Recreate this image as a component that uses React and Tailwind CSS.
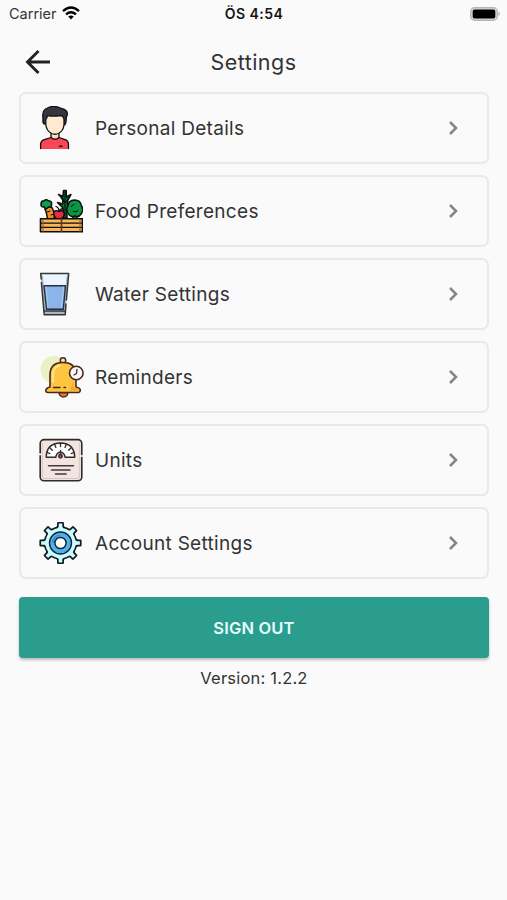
const PersonIcon = () => (
    <svg viewBox="0 0 44 44" className="size-11" strokeLinejoin="round" strokeLinecap="round">
        <path d="M12 25h8v8l-4 2-4-2z" fill="#f9dcb8" stroke="#111" strokeWidth="1.3" />
        <path d="M1.6 43V38Q1.8 34.5 6 33.3L12 31.5Q16 35 20 31.5L25.5 33.3Q29.4 34.5 29.5 38V43z" fill="#fb4659" />
        <path d="M1.6 42.5V38Q1.8 34.5 6 33.3L12 31.5Q16 35 20 31.5L25.5 33.3Q29.4 34.5 29.5 38V42.5" fill="none" stroke="#1b0c10" strokeWidth="1.3" />
        <path d="M20.5 40.2h2.5" stroke="#3a0a12" strokeWidth="1.6" />
        <path d="M5.5 18Q3.5 18 4 12Q2.5 3.5 9.500 1.500Q16-1 22.500 2.500Q29 4 28.300 9Q27.200 11 27.200 13Q27.200 18 25.500 19z" fill="#34353f" stroke="#111218" strokeWidth="1.3" />
        <path d="M6.800 13.500Q8.200 12 8.500 9.700Q15 10.800 22 9.500Q24.500 10 25 13.500V18.500Q24.500 25 19.500 27.500Q16 29 12.500 27.500Q7.500 25 6.800 18.500z" fill="#feead0" stroke="#17171b" strokeWidth="1.3" />
    </svg>
);

const FoodIcon = () => (
    <svg viewBox="0 0 44 44" className="size-11" stroke="#0b0d0b" strokeLinejoin="round" strokeLinecap="round">
        <path d="M24 29V19L18.500 13.500L23.500 15L24 10L19.500 5.500L24 7.500L24.500 1.500H27.200L27.500 8L32 5.500L28.800 11.500L28.500 15.500L32 13L28 20V29z" fill="#096e3e" strokeWidth="1.5" />
        <path d="M26 3v24M22 9l4 5l3.500-5" fill="none" strokeWidth="1.1" />
        <path d="M33.500 22h5l-.5 8h-4z" fill="#0b813d" strokeWidth="1.4" />
        <path d="M29.200 24.500Q26.500 20 29.200 16.500Q29.500 11.300 35.500 11Q41.500 11 42.300 16.500Q45 20 42.500 24.500Q39.500 29 36 26.800Q31.500 29 29.200 24.500z" fill="#099541" strokeWidth="1.4" />
        <path d="M32.500 17.500q.5-2 2.500-2M34.500 22.500q3 1.500 4.500-1" fill="none" strokeWidth="1" />
        <path d="M6 20Q9 16.500 13 18.500Q16 24 15 30H8.500Q8 25 6 20z" fill="#f58b28" strokeWidth="1.4" />
        <path d="M8 23l3-.8M12 26l2.500-.8" fill="none" strokeWidth="1" />
        <path d="M6.500 20.500L5.500 18Q1.500 18.500 2 15Q2 12 5 11.800Q7 9.800 9.500 11.800Q13.500 12 12.500 16Q12.500 18.500 9.500 18z" fill="#09a14b" strokeWidth="1.5" />
        <path d="M20 22.300Q14.500 20 14.800 25Q15.500 30 20 30Q25 29.500 25.200 25Q25 20.500 20 22.300z" fill="#e52b45" strokeWidth="1.4" />
        <path d="M20 22.500q0-4-3-5M20 22q2-3 4-2" fill="none" strokeWidth="1.3" />
        <path d="M1.500 29.800h42v13H1.500z" fill="#f6b557" strokeWidth="1.6" />
        <path d="M2 34.100h41M2 38.400h41" fill="none" strokeWidth="1.3" />
        <path d="M22.500 30v12.500" stroke="#5d3a18" strokeWidth="1.6" />
        <path d="M4 30.500v12M41 30.500v12" stroke="#8d572c" strokeWidth="1" />
    </svg>
);

const WaterIcon = () => (
    <svg viewBox="0 0 44 44" className="size-11" strokeLinejoin="round" strokeLinecap="round">
        <path d="M1.8 1.2H29.5L26.2 42.8H5.2z" fill="#eaf5ff" />
        <path d="M4 5L7 38.5H24.5L27.5 5L29.5 1.2L26.2 42.8H5.2L1.8 1.2z" fill="#adb5bf" />
        <path d="M5 13.8H26.5L24.3 37.2H7.5z" fill="#8bb5e8" stroke="#252d38" strokeWidth="1.4" />
        <path d="M7 15l2 20.5M24.5 15l-2 20.5" stroke="#a9cbf2" strokeWidth="1" />
        <path d="M2.2 7L1.7 1.4H29.7L27.4 28M27 32L26.2 42.8H5.2L2.4 10.5M5 39H26.3" fill="none" stroke="#33373d" strokeWidth="1.5" />
    </svg>
);

const ReminderIcon = () => (
    <svg viewBox="0 0 45 44" className="h-11 w-[45px]" stroke="#49291f" strokeLinejoin="round" strokeLinecap="round">
        <circle cx="15" cy="14.5" r="13.5" fill="#eaf1c7" stroke="none" />
        <path d="M20 37.5Q20.5 42 24.5 42Q28.5 42 29 37.5z" fill="#ed751f" strokeWidth="1.4" />
        <circle cx="24" cy="5.5" r="2.7" fill="#fae7bc" strokeWidth="1.5" />
        <path d="M11 32V20Q11 7.5 24 7.5Q37 7.5 37 20V32Q41.5 33 41.3 35.5Q41 37.5 39 37.5H9Q6.8 37.5 6.8 35.5Q7 33 11 32z" fill="#fec543" strokeWidth="1.6" />
        <path d="M14 27V20Q14 12.5 20.5 10.5" fill="none" stroke="#ffe18b" strokeWidth="2.3" />
        <path d="M34.5 26v6.5H37l3 3H31z" fill="#f6a630" stroke="none" />
        <path d="M14.5 32.5H21M25 32.5h1.5" strokeWidth="1.5" />
        <circle cx="37.3" cy="18" r="6.8" fill="#fbf7fa" strokeWidth="1.6" />
        <path d="M38 14.5L37.5 18.5L35 20" fill="none" strokeWidth="1.3" />
    </svg>
);

const UnitsIcon = () => (
    <svg viewBox="0 0 44 44" className="size-11" stroke="#302a2a" strokeLinejoin="round" strokeLinecap="round">
        <rect x="1.2" y="1.6" width="41.6" height="41.2" rx="3.8" fill="#f2e5e1" strokeWidth="1.6" />
        <path d="M3.3 5v33.5Q3.5 40.5 6 40.5H38Q40.5 40.5 40.7 38V5" fill="none" stroke="#d5c4bf" strokeWidth="1" />
        <path d="M0 16.3h2.5M41.5 18h2" stroke="#fafafa" strokeWidth="1.7" />
        <path d="M7.2 19.3Q7.5 5.3 21.5 5.1Q35.2 5.3 35.7 19.3H26.2Q25.2 14.3 21.5 14.3Q17.700 14.300 16.700 19.300z" fill="#fff" strokeWidth="1.5" />
        <path d="M8.2 14.5l2.800 1.100M11 10l2.300 2.200M15.700 6.500l1.200 2.900M21.500 5.500v3M27.200 6.500l-1.200 2.900M31.900 10L29.700 12.200M34.900 14.500l-2.800 1.100M21.500 12.500v4" fill="none" strokeWidth="1.3" />
        <circle cx="21.5" cy="18.3" r="1.8" fill="#b5483c" strokeWidth="1.3" />
        <path d="M9.5 27.8H34.5M12.5 32H31M16.5 35.9H27.2" stroke="#453a37" strokeWidth="1.5" />
    </svg>
);

const teeth = [0, 45, 90, 135, 180, 225, 270, 315];

const AccountIcon = () => (
    <svg viewBox="0 0 44 44" className="size-11" strokeLinejoin="round">
        {teeth.map(deg => (
            <path key={deg} d="M17.3 9.5L19.3 5V2.2H23.7V5L25.7 9.5z" transform={`rotate(${deg} 21.5 22)`} fill="#c9fbff" stroke="#111a20" strokeWidth="2.6" />
        ))}
        <circle cx="21.5" cy="22" r="15.9" fill="#c9fbff" stroke="#111a20" strokeWidth="1.6" />
        {teeth.map(deg => (
            <path key={deg} d="M17.8 9.5L19.7 5.5V2.6H23.3V5.5L25.2 9.5z" transform={`rotate(${deg} 21.5 22)`} fill="#c9fbff" />
        ))}
        <circle cx="21.5" cy="22" r="11" fill="#4db2ef" stroke="#162430" strokeWidth="1.4" />
        <path d="M13.7 22a7.8 7.8 0 0 1 7.8-7.8" fill="none" stroke="#3297d9" strokeWidth="2" />
        <circle cx="21.5" cy="22" r="5.6" fill="#fff" stroke="#162430" strokeWidth="1.5" />
    </svg>
);

const items = [
    { label: 'Personal Details', icon: PersonIcon },
    { label: 'Food Preferences', icon: FoodIcon },
    { label: 'Water Settings', icon: WaterIcon },
    { label: 'Reminders', icon: ReminderIcon },
    { label: 'Units', icon: UnitsIcon },
    { label: 'Account Settings', icon: AccountIcon },
];

const StatusBar = () => (
    <div className="flex h-7 items-center pl-[9px] pr-[6px] text-black">
        <div className="flex flex-1 items-center gap-[5px]">
            <span className="text-[14.5px] text-[#333]">Carrier</span>
            <svg viewBox="0 0 18 14" className="mb-[2px] h-[14px] w-[18px]" fill="none" stroke="#000" strokeWidth="2.4">
                <path d="M1 5.2Q9-2 17 5.2M4 8.3Q9 4 14 8.3" />
                <path d="M6.2 10.5Q9 8.3 11.8 10.5L9 13.5z" fill="#000" stroke="none" />
            </svg>
        </div>
        <span className="mb-[2px] mr-[2px] text-center text-[14px] font-semibold tracking-[0.45px] text-[#151515]">ÖS 4:54</span>
        <div className="flex flex-1 justify-end">
            <svg viewBox="0 0 31 14" className="mb-px h-[14px] w-[31px]">
                <rect x=".7" y=".7" width="26.6" height="12.6" rx="3.8" fill="#d4d4d4" stroke="#b5b5b5" strokeWidth="1.2" />
                <rect x="2.7" y="2.5" width="22.6" height="9" rx="2" fill="#000" />
                <path d="M28.5 4.8q2.8 2.2 0 4.4z" fill="#aaa" />
            </svg>
        </div>
    </div>
);

const App = () => {
    return (
        <div className="min-h-[900px] w-full bg-[#fafafa] font-['Inter',sans-serif] text-[#333]">
            <StatusBar />
            <header className="grid h-16 grid-cols-[60px_1fr_60px] items-center pt-1">
                <button className="ml-[25px]" aria-label="Back">
                    <svg viewBox="0 0 26 26" className="size-[26px]" fill="none" stroke="#222" strokeWidth="2.9">
                        <path d="M25 13H3M13.5 2L2.5 13L13.5 24" />
                    </svg>
                </button>
                <h1 className="pt-px text-center text-[21.5px] tracking-[0.45px]">Settings</h1>
            </header>
            <main className="pl-[19px] pr-[18px]">
                <div className="flex flex-col gap-[11px]">
                    {items.map(({ label, icon: Icon }) => (
                        <button
                            key={label}
                            className="flex h-[72px] w-full items-center rounded-[7px] border-2 border-[#e9e9e9] pl-[18px] pr-[26px] text-left"
                        >
                            <span className="w-11 shrink-0">
                                <Icon />
                            </span>
                            <span className="ml-3 flex-1 pt-[3px] text-[19px] tracking-[0.3px]">{label}</span>
                            <svg viewBox="0 0 14 18" className="h-[18px] w-[14px]" fill="none" stroke="#858585" strokeWidth="2.5">
                                <path d="M3 3L9 9L3 15" />
                            </svg>
                        </button>
                    ))}
                </div>
                <button className="mt-[18px] h-[61px] w-full rounded-[4px] bg-[#2a9d8f] pt-px text-[16.5px] font-semibold tracking-[0.15px] text-[#e6fffb] shadow-[0_2px_3px_rgba(0,0,0,0.25)]">
                    SIGN OUT
                </button>
                <p className="mt-2 text-center text-[16.5px] leading-6 tracking-[0.2px]">Version: 1.2.2</p>
            </main>
        </div>
    );
};

export default App;
